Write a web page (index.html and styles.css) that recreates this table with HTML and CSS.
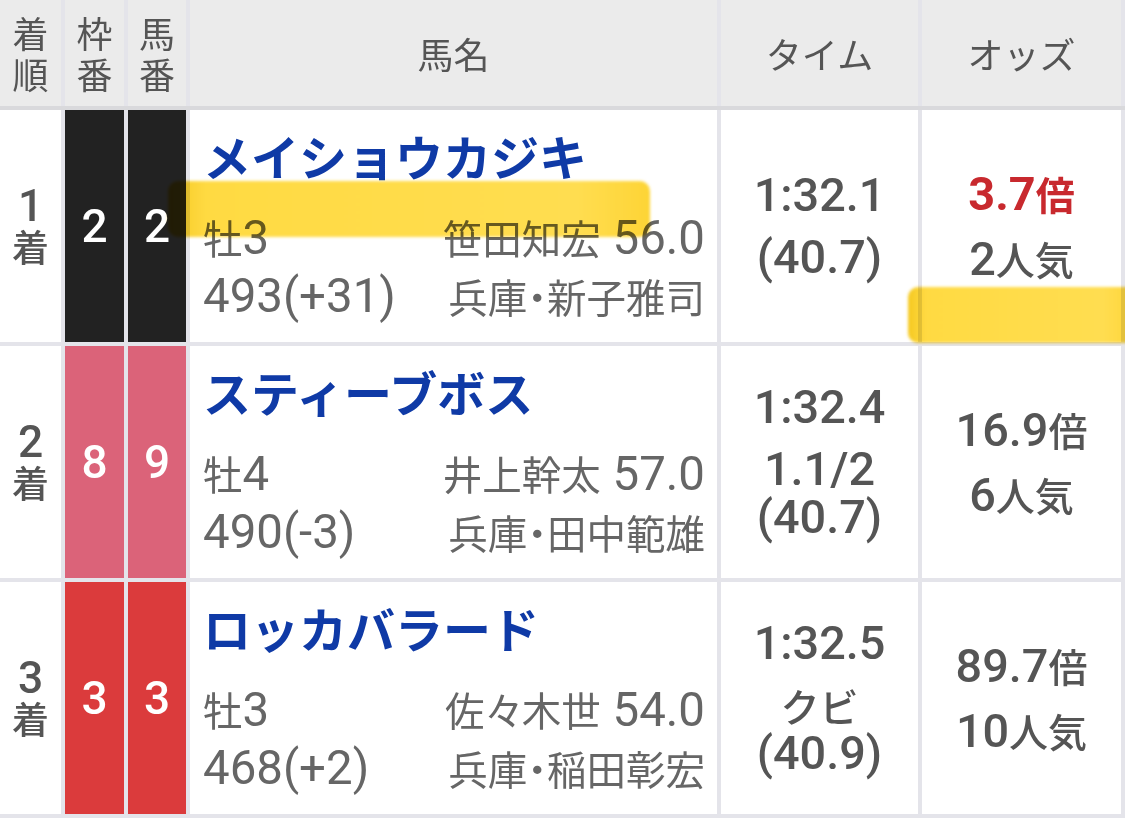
FILE: index.html
```html
<!DOCTYPE html>
<html lang="ja">
<head>
<meta charset="utf-8">
<title>レース結果</title>
<link rel="stylesheet" href="styles.css">
</head>
<body>
<div class="table">
  <div class="row head">
    <div class="hc"><div>着</div><div>順</div></div>
    <div class="hc"><div>枠</div><div>番</div></div>
    <div class="hc"><div>馬</div><div>番</div></div>
    <div class="hc">馬名</div>
    <div class="hc">タイム</div>
    <div class="hc">オッズ</div>
  </div>

  <div class="row">
    <div class="cell rank"><div class="n">1</div><div>着</div></div>
    <div class="num w-black">2</div>
    <div class="num w-black">2</div>
    <div class="cell name">
      <div class="horse">メイショウカジキ</div>
      <div class="info">
        <div class="l"><div>牡<span class="n">3</span></div><div class="n">493(+31)</div></div>
        <div class="r"><div>笹田知宏<span class="n"> 56.0</span></div><div>兵庫・新子雅司</div></div>
      </div>
    </div>
    <div class="cell time"><div class="t n">1:32.1</div><div class="s n">(40.7)</div></div>
    <div class="cell odds"><div class="o hot"><span class="n">3.7</span>倍</div><div class="o"><span class="n">2</span>人気</div></div>
  </div>

  <div class="row">
    <div class="cell rank"><div class="n">2</div><div>着</div></div>
    <div class="num w-pink">8</div>
    <div class="num w-pink">9</div>
    <div class="cell name">
      <div class="horse">スティーブボス</div>
      <div class="info">
        <div class="l"><div>牡<span class="n">4</span></div><div class="n">490(-3)</div></div>
        <div class="r"><div>井上幹太<span class="n"> 57.0</span></div><div>兵庫・田中範雄</div></div>
      </div>
    </div>
    <div class="cell time"><div class="t n">1:32.4</div><div class="s n">1.1/2</div><div class="s n">(40.7)</div></div>
    <div class="cell odds"><div class="o"><span class="n">16.9</span>倍</div><div class="o"><span class="n">6</span>人気</div></div>
  </div>

  <div class="row">
    <div class="cell rank"><div class="n">3</div><div>着</div></div>
    <div class="num w-red">3</div>
    <div class="num w-red">3</div>
    <div class="cell name">
      <div class="horse">ロッカバラード</div>
      <div class="info">
        <div class="l"><div>牡<span class="n">3</span></div><div class="n">468(+2)</div></div>
        <div class="r"><div>佐々木世<span class="n"> 54.0</span></div><div>兵庫・稲田彰宏</div></div>
      </div>
    </div>
    <div class="cell time"><div class="t n">1:32.5</div><div class="s">クビ</div><div class="s n">(40.9)</div></div>
    <div class="cell odds"><div class="o"><span class="n">89.7</span>倍</div><div class="o"><span class="n">10</span>人気</div></div>
  </div>

  <div class="marker m1"></div>
  <div class="marker m2"></div>
</div>
</body>
</html>
```

FILE: styles.css
```css
html, body {
  margin: 0;
  padding: 0;
  background: #ffffff;
}
body {
  font-family: "Noto Sans CJK JP", "Noto Sans", sans-serif;
  color: #555555;
  width: 1125px;
  height: 819px;
  overflow: hidden;
}
.n {
  font-family: "Roboto", "Noto Sans CJK JP", sans-serif;
  font-size: 1.2em;
}
.table {
  position: relative;
  width: 1125px;
}
.row {
  display: grid;
  grid-template-columns: 61px 59px 58px 527px 197px 199px;
  column-gap: 4px;
  padding-right: 4px;
  background: #e4e4ea;
  height: 232px;
  border-bottom: 4px solid #e4e4ea;
}
.row.head {
  height: 106px;
  border-bottom: 4px solid #d9d9dc;
}
.hc {
  background: #ebebeb;
  display: flex;
  flex-direction: column;
  align-items: center;
  justify-content: center;
  text-align: center;
  font-size: 36px;
  line-height: 41px;
  color: #555;
}
.cell {
  background: #ffffff;
}
.rank {
  display: flex;
  flex-direction: column;
  align-items: center;
  justify-content: center;
  text-align: center;
  font-size: 37px;
  line-height: 40px;
  font-weight: 500;
  color: #555;
}
.num {
  display: flex;
  align-items: center;
  justify-content: center;
  color: #ffffff;
  font-family: "Roboto", sans-serif;
  font-size: 46px;
  font-weight: 500;
}
.w-black { background: #222222; }
.w-pink { background: #db6379; }
.w-red { background: #db3b3c; }
.name {
  padding: 15px 12px 0 13px;
}
.horse {
  font-size: 48px;
  line-height: 60px;
  font-weight: 700;
  color: #0f3aa6;
  white-space: nowrap;
}
.info {
  margin-top: 23px;
  display: flex;
  justify-content: space-between;
  font-size: 39.5px;
  font-feature-settings: "palt";
  line-height: 58px;
  color: #666666;
  white-space: nowrap;
}
.info .r {
  text-align: right;
}
.time, .odds {
  display: flex;
  flex-direction: column;
  align-items: center;
  justify-content: center;
  color: #555;
  font-weight: 500;
  font-size: 39px;
}
.time .t {
  line-height: 48px;
  margin-bottom: 14px;
}
.time .s {
  line-height: 48px;
}
.odds .o {
  line-height: 64px;
}
.odds .hot {
  color: #c8292e;
  font-weight: 700;
}
.marker {
  position: absolute;
  border-radius: 10px;
  background: linear-gradient(90deg, #f5c614 0%, #ffd838 8%, #ffdb46 85%, #fdd22a 100%);
  mix-blend-mode: multiply;
  filter: blur(1.5px);
  opacity: 0.95;
}
.m1 {
  left: 168px;
  top: 181px;
  width: 482px;
  height: 56px;
}
.m2 {
  left: 908px;
  top: 287px;
  width: 230px;
  height: 56px;
  border-radius: 10px 0 0 10px;
}
```
